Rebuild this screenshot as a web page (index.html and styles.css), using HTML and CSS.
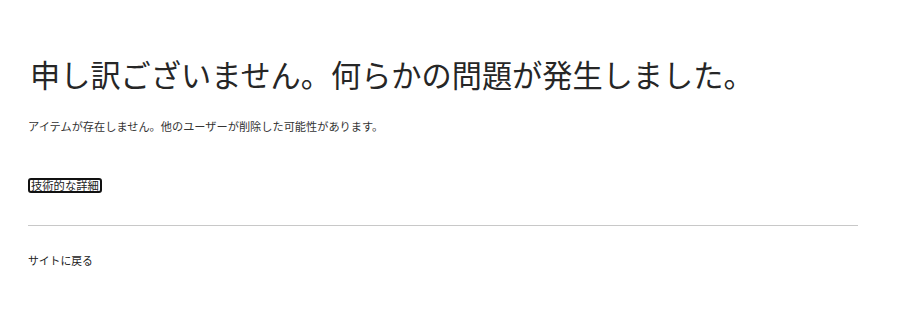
FILE: index.html
```html
<!DOCTYPE html>
<html><head><meta charset="UTF-8">
<title>エラー</title>
<link rel="stylesheet" href="styles.css">
</head>
<body>
<div class="page">
  <h1 class="title">申し訳ございません。何らかの問題が発生しました。</h1>
  <p class="message">アイテムが存在しません。他のユーザーが削除した可能性があります。</p>
  <div class="details"><button class="details-btn">技術的な詳細</button></div>
  <hr class="sep">
  <a class="back" href="#">サイトに戻る</a>
</div>
</body></html>
```

FILE: styles.css
```css
*{margin:0;padding:0;}
body{background:#fff;color:#222;font-family:"Noto Sans CJK JP","Noto Sans",sans-serif;}
.page{width:830px;padding:51px 0 0 28px;}
.title{font-size:30.2px;font-weight:400;line-height:46px;color:#262626;margin-left:2px;}
.message{font-size:11.2px;line-height:16px;margin-top:21px;color:#333;}
.details{margin-top:37px;height:14px;}
.details-btn{font-family:inherit;font-size:11.3px;line-height:11px;padding:0 1px;background:#fff;border:2px solid #111;border-radius:3px;color:#222;cursor:pointer;}
.sep{border:0;border-top:1px solid #c8c8c8;margin-top:40px;}
.back{display:block;margin-top:26px;font-size:10.8px;line-height:16px;color:#222;text-decoration:none;}
```
